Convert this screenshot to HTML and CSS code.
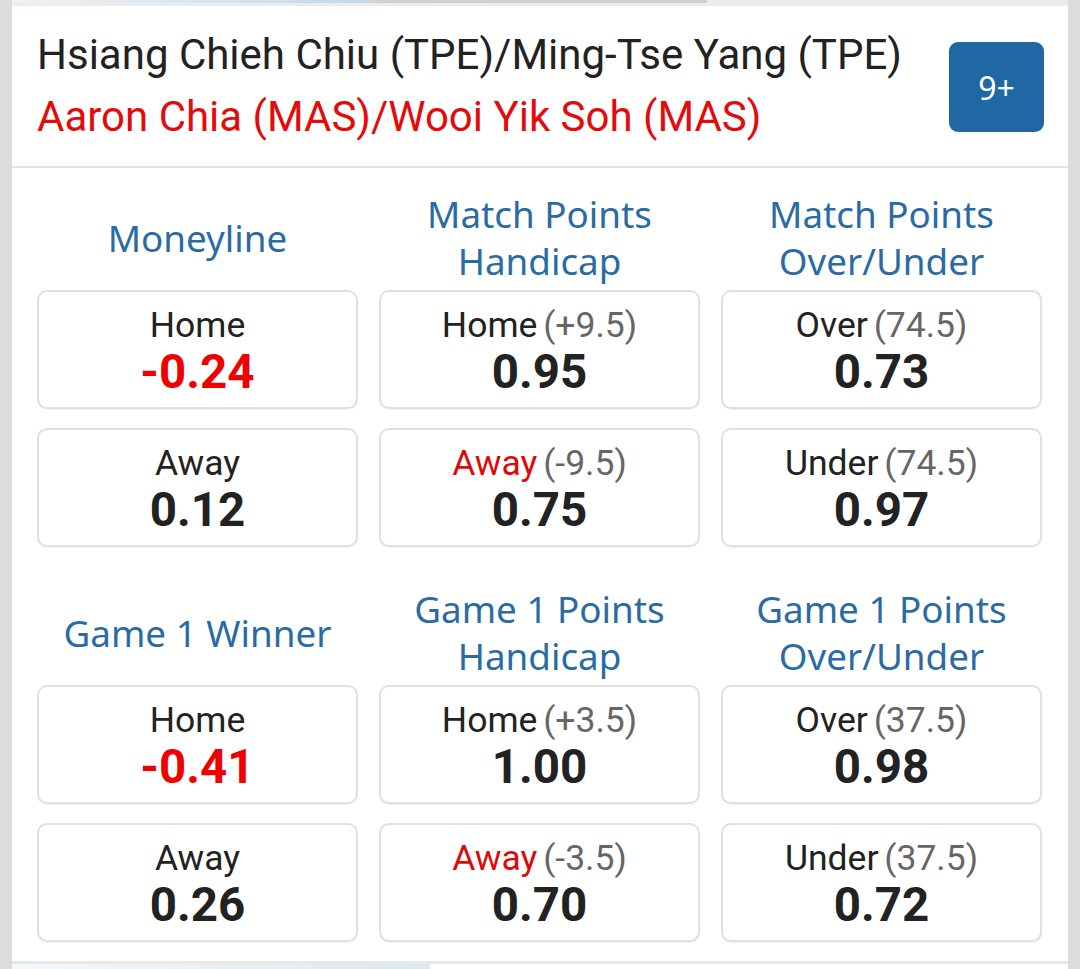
FILE: index.html
```html
<!DOCTYPE html>
<html>
<head>
<meta charset="utf-8">
<link rel="stylesheet" href="styles.css">
</head>
<body>
<div class="page">
  <div class="top-strip"><div class="top-bar"></div></div>
  <div class="card">
    <div class="header">
      <div class="teams">
        <div class="team home-team">Hsiang Chieh Chiu (TPE)/Ming-Tse Yang (TPE)</div>
        <div class="team away-team">Aaron Chia (MAS)/Wooi Yik Soh (MAS)</div>
      </div>
      <div class="badge">9+</div>
    </div>
    <div class="markets">
      <div class="section">
        <div class="col">
          <div class="title">Moneyline</div>
          <div class="odd"><div class="label">Home</div><div class="price neg">-0.24</div></div>
          <div class="odd"><div class="label">Away</div><div class="price">0.12</div></div>
        </div>
        <div class="col">
          <div class="title">Match Points<br>Handicap</div>
          <div class="odd"><div class="label">Home <span class="line">(+9.5)</span></div><div class="price">0.95</div></div>
          <div class="odd"><div class="label"><span class="red">Away</span> <span class="line">(-9.5)</span></div><div class="price">0.75</div></div>
        </div>
        <div class="col">
          <div class="title">Match Points<br>Over/Under</div>
          <div class="odd"><div class="label">Over <span class="line">(74.5)</span></div><div class="price">0.73</div></div>
          <div class="odd"><div class="label">Under <span class="line">(74.5)</span></div><div class="price">0.97</div></div>
        </div>
      </div>
      <div class="section">
        <div class="col">
          <div class="title">Game 1 Winner</div>
          <div class="odd"><div class="label">Home</div><div class="price neg">-0.41</div></div>
          <div class="odd"><div class="label">Away</div><div class="price">0.26</div></div>
        </div>
        <div class="col">
          <div class="title">Game 1 Points<br>Handicap</div>
          <div class="odd"><div class="label">Home <span class="line">(+3.5)</span></div><div class="price">1.00</div></div>
          <div class="odd"><div class="label"><span class="red">Away</span> <span class="line">(-3.5)</span></div><div class="price">0.70</div></div>
        </div>
        <div class="col">
          <div class="title">Game 1 Points<br>Over/Under</div>
          <div class="odd"><div class="label">Over <span class="line">(37.5)</span></div><div class="price">0.98</div></div>
          <div class="odd"><div class="label">Under <span class="line">(37.5)</span></div><div class="price">0.72</div></div>
        </div>
      </div>
    </div>
  </div>
  <div class="bottom-strip"><div class="bottom-bar"></div></div>
</div>
</body>
</html>
```

FILE: styles.css
```css
html, body {
  margin: 0;
  padding: 0;
}
body {
  background: #dcdcdc;
  width: 1080px;
  height: 969px;
  overflow: hidden;
  font-family: Roboto, "Liberation Sans", sans-serif;
}
.page {
  display: flex;
  flex-direction: column;
}
.top-strip {
  height: 6px;
  margin: 0 12px;
  background: #ececec;
  display: flex;
  align-items: flex-start;
}
.top-bar {
  width: 695px;
  height: 3px;
  background: linear-gradient(to right, #eef3f7 0%, #c9d8e4 50%, #d0d0d0 55%, #cfcfcf 100%);
}
.card {
  margin: 0 12px;
  background: #fff;
  border-bottom: 3px solid #e8e8e8;
}
.header {
  height: 160px;
  border-bottom: 2px solid #e4e4e4;
  display: flex;
  align-items: center;
  padding: 0 24px 0 25px;
}
.teams {
  flex: 1;
  display: flex;
  flex-direction: column;
  gap: 12px;
  margin-top: 0;
}
.team {
  font-size: 42px;
  line-height: 50px;
  white-space: nowrap;
}
.home-team { color: #222; }
.away-team { color: #e30b0b; }
.badge {
  width: 95px;
  height: 90px;
  border-radius: 9px;
  background: #1f68a3;
  color: #fff;
  font-family: "Noto Sans", sans-serif;
  font-size: 32px;
  display: flex;
  align-items: center;
  justify-content: center;
  margin-top: 2px;
}
.markets {
  padding: 0 26px 19px 25px;
  display: flex;
  flex-direction: column;
}
.section {
  display: grid;
  grid-template-columns: repeat(3, 321px);
  column-gap: 21px;
  padding-top: 23px;
}
.section + .section {
  padding-top: 39px;
}
.col {
  display: flex;
  flex-direction: column;
  gap: 19px;
}
.title {
  font-family: "Noto Sans", sans-serif;
  font-size: 36.8px;
  line-height: 47px;
  height: 94px;
  color: #2a6ba3;
  text-align: center;
  display: flex;
  align-items: center;
  justify-content: center;
  margin-bottom: -14px;
}
.odd {
  height: 119px;
  box-sizing: border-box;
  border: 2px solid #e0e0e0;
  border-radius: 10px;
  box-shadow: 0 1px 1px rgba(0,0,0,0.06);
  display: flex;
  flex-direction: column;
  align-items: center;
  padding-top: 12px;
}
.label {
  font-size: 35.5px;
  line-height: 42px;
  color: #222;
  white-space: nowrap;
  word-spacing: -3px;
}
.line {
  color: #666;
}
.red {
  color: #dd0a0a;
}
.price {
  font-size: 47.5px;
  font-weight: bold;
  line-height: 52px;
  color: #222;
}
.price.neg {
  color: #f00000;
}
.bottom-strip {
  margin: 0 12px;
  height: 10px;
  background: #fff;
}
.bottom-bar {
  width: 418px;
  height: 10px;
  background: linear-gradient(to right, #f4f8fb 0%, #d9e8f2 100%);
}
```
